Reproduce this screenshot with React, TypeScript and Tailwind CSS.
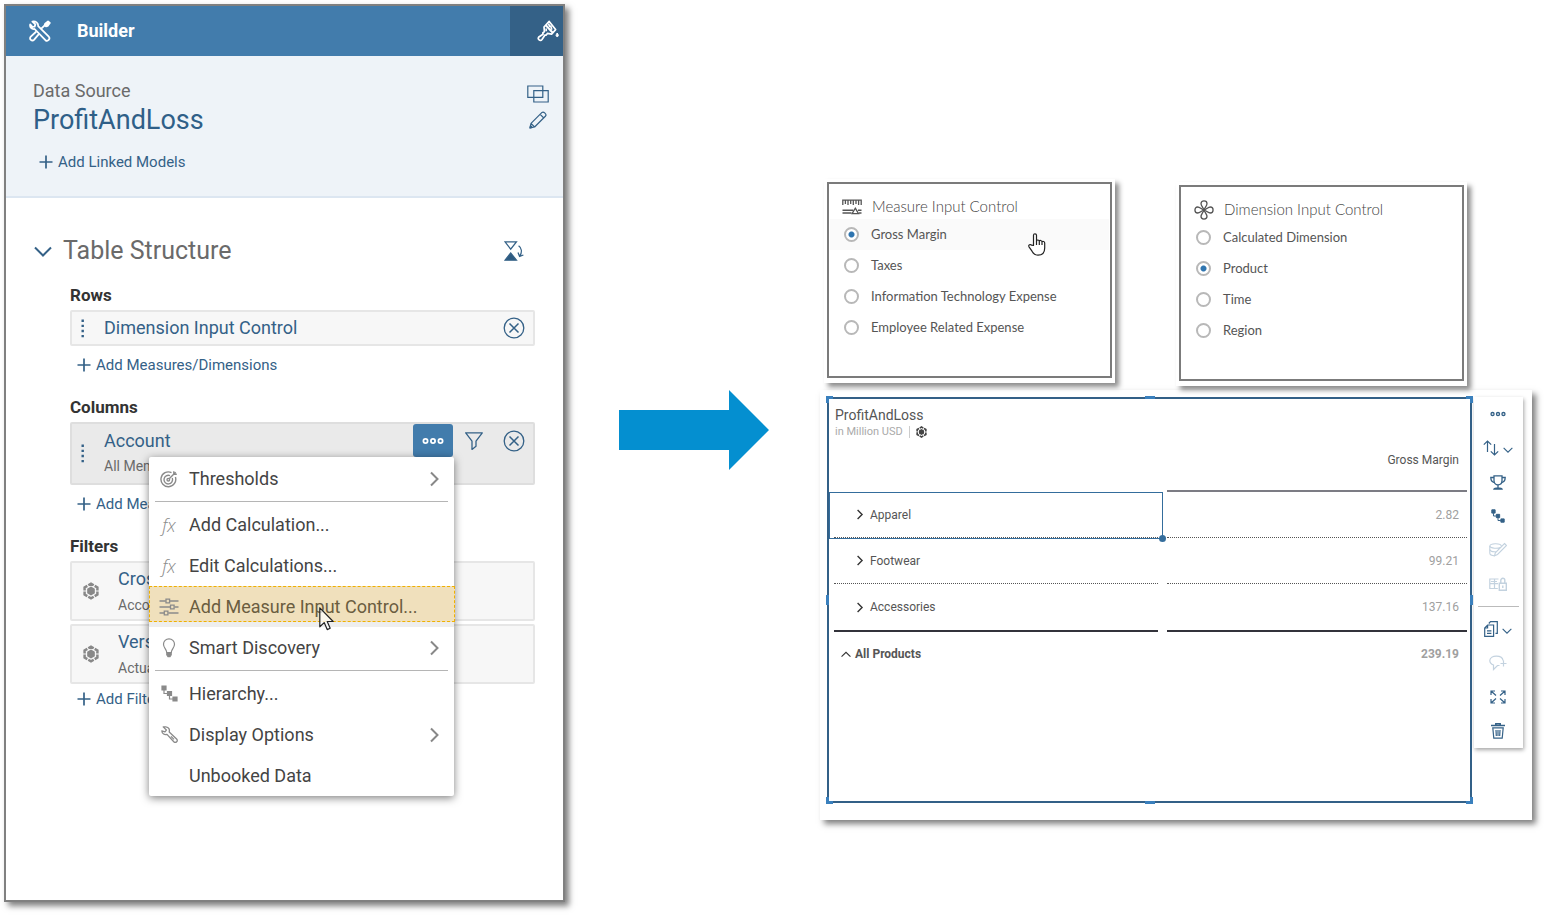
import { useState, type ReactNode } from "react";
import clsx from "clsx";

interface IconProps {
  className?: string;
}

/* ---------- Icons ---------- */

const ToolsIcon = () => (
  <svg viewBox="0 0 22 22" className="size-[22px]" fill="none" stroke="#fff" strokeWidth="1.8" strokeLinejoin="round" strokeLinecap="round">
    <path d="M3.400 1.600 6.400 4.400 5.600 6.600 3.400 6.900 1.200 4.400C.6 7.400 2.600 9.400 5.600 9L16.400 20.200C18.800 22 21.600 19 19.800 16.700L9.200 6.200C9.400 3 6.600.8 3.400 1.600Z" />
    <path d="M12.800 8.200 16 5.200M9.600 14.400 5.200 19.600C3 22-.4 18.800 1.800 16.600L6.800 12" />
    <path d="M16.200 3.600 19 1.400 20.800 3 18.600 6 17 6.400 15.600 5.200Z" fill="#fff" />
  </svg>
);

const BrushIcon = () => (
  <svg viewBox="0 0 22 22" className="size-[22px]" fill="none" stroke="#fff" strokeWidth="1.700" strokeLinejoin="round">
    <path d="M12.200 1.400 18.600 9.600 14.600 14.200 10.400 13.400 9 15.200 8 15 5 19.400C3.200 21.800.2 19.200 1.800 17L6 14.200 5.800 13 7.400 11.600 7 7Z" />
    <path d="m8.600 5 7.400 8" strokeWidth="2" />
    <path d="M11.400 3.600 13 7M13.600 5.400l1.200 4.400M9.200 8.600v2.600" />
    <path d="M20.200 13c1.700 2.300 1.300 3.600 0 3.600s-1.700-1.300 0-3.600Z" fill="#fff" strokeWidth="1" />
  </svg>
);

const OverlapIcon = () => (
  <svg viewBox="0 0 22 18" className="h-[18px] w-[22px]" fill="none" stroke="#346187" strokeWidth="1.200">
    <path d="M.8 1h15v11.400H.8zM6.800 5.600h14.400v11.400H6.800z" />
  </svg>
);

const PencilIcon = () => (
  <svg viewBox="0 0 18 18" className="size-[18px]" fill="none" stroke="#346187" strokeWidth="1.200" strokeLinejoin="round">
    <path d="M1 17 2 12.400 13 1.400C14.600.2 18 3.200 16.600 5L5.600 16ZM2 12.400 5.600 16M11.200 3.400l3.600 3.600" />
    <path d="m1 17 .5-2.400 1.900 1.900Z" fill="#346187" />
  </svg>
);

const SwapIcon = () => (
  <svg viewBox="0 0 20 20" className="size-5" fill="none" stroke="#346187" strokeWidth="1.300">
    <path d="M1 .8h11.400L6.700 8.200Z" />
    <path d="M1 19.200h11.400L6.700 12Z" fill="#2d5a80" />
    <path d="M14.600 4.800c3 2 3.600 6 1.400 10M14 11.600l1.600 3.800 3.800-1.400" />
  </svg>
);

const PlusIcon = () => (
  <svg viewBox="0 0 14 14" className="size-3.5" stroke="#346187" strokeWidth="1.700">
    <path d="M7 .5v13M.5 7h13" />
  </svg>
);

const CloseCircleIcon = () => (
  <svg viewBox="0 0 22 22" className="size-[22px]" fill="none" stroke="#346187" strokeWidth="1.300">
    <circle cx="11" cy="11" r="9.800" />
    <path d="m6.500 6.500 9 9m0-9-9 9" strokeWidth="1.500" />
  </svg>
);

const FunnelIcon = () => (
  <svg viewBox="0 0 18 18" className="size-[18px]" fill="none" stroke="#346187" strokeWidth="1.300" strokeLinejoin="round">
    <path d="M.7.800h16.600L11 9.200v5L7 17.400V9.200Z" />
  </svg>
);

const DotsIcon = ({ className }: IconProps) => (
  <svg viewBox="0 0 22 8" className={className} fill="none" stroke="currentColor" strokeWidth="1.800">
    <circle cx="3.500" cy="4" r="2.100" />
    <circle cx="11" cy="4" r="2.100" />
    <circle cx="18.500" cy="4" r="2.100" />
  </svg>
);

const GripIcon = () => (
  <svg viewBox="0 0 5 19" className="h-[19px] w-[5px]" fill="#346187">
    <path d="M1.500.600h2.400V3H1.500zM1.500 5.700h2.400v2.400H1.500zM1.500 10.800h2.400v2.400H1.500zM1.500 15.900h2.400v2.400H1.500z" />
  </svg>
);

const CubeIcon = ({ className }: IconProps) => (
  <svg viewBox="0 0 18 20" className={className} fill="none" stroke="currentColor" strokeWidth="2.800">
    <path d="M9 1.800 16.200 5.900v8.200L9 18.200 1.800 14.100V5.900Z" strokeDasharray="7 1.260" strokeDashoffset="3.500" />
    <path d="m9 5 4.300 2.500v5L9 15l-4.300-2.500v-5Z" fill="currentColor" stroke="none" />
  </svg>
);

const ChevronIcon = ({ className }: IconProps) => (
  <svg viewBox="0 0 9 16" className={className} fill="none" stroke="currentColor" strokeWidth="2">
    <path d="m1 1.500 6.500 6.500L1 14.500" />
  </svg>
);

const ChevronDownIcon = ({ className }: IconProps) => (
  <svg viewBox="0 0 18 11" className={className} fill="none" stroke="currentColor" strokeWidth="2">
    <path d="m1 1.500 8 8 8-8" />
  </svg>
);

const TargetIcon = () => (
  <svg viewBox="0 0 18 18" className="size-[18px]" fill="none" stroke="currentColor" strokeWidth="1.400">
    <path d="M11.500 2.600A7.400 7.400 0 1 0 15.400 7" />
    <path d="M10 5.700a4.300 4.300 0 1 0 2.300 2.400" />
    <circle cx="8.300" cy="9.700" r="1.300" />
    <path d="m9.200 8.800 6.500-6.500M13.800 1.200v3h3" />
  </svg>
);

const SlidersIcon = () => (
  <svg viewBox="0 0 20 18" className="h-[18px] w-5" fill="none" stroke="currentColor" strokeWidth="1.300">
    <path d="M.5 3h6.300M11 3h8.500M.5 9h10.800M15.500 9h4M.5 15H5M9.300 15h10.200" />
    <path d="M7 1.200h3.600v3.600H7zM11.500 7.200h3.600v3.600h-3.600zM5.300 13.200h3.600v3.600H5.300z" />
  </svg>
);

const BulbIcon = () => (
  <svg viewBox="0 0 14 20" className="h-5 w-3.5" fill="none" stroke="currentColor" strokeWidth="1.200">
    <path d="M4.800 14.500C4.500 11 1.500 10 1.500 6.300a5.500 5.500 0 0 1 11 0c0 3.700-3 4.700-3.300 8.200Z" />
    <path d="M4.800 14.500h4.400v2.300L8 18.600H6l-1.200-1.800Z" fill="currentColor" />
  </svg>
);

const HierarchyIcon = ({ className }: IconProps) => (
  <svg viewBox="0 0 17 17" className={className} fill="currentColor" stroke="currentColor" strokeWidth="1.200">
    <path d="M1 1h4v4H1zM6.500 6.500h4v4h-4zM12 12h4v4h-4z" />
    <path d="M3 5v3.500h4M8.500 10v4H12" fill="none" />
  </svg>
);

const WrenchIcon = () => (
  <svg viewBox="0 0 17 17" className="size-[17px]" fill="none" stroke="currentColor" strokeWidth="1.300" strokeLinejoin="round">
    <path d="M2.200.900h2.600C8 1.200 8.800 3.600 8.200 6l7.400 7c1.800 2-.8 4.600-2.800 2.800L6 8.400C3.600 9 1 8 .8 4.800L4 5.800 5.400 4ZM10 10.400l3 3" />
  </svg>
);

const RulerIcon = () => (
  <svg viewBox="0 0 20 16" className="h-4 w-5" fill="none" stroke="#555" strokeWidth="1.300">
    <path d="M.8 6V1.200h18.400V6M3.400 1v4M6 1v5M8.700 1v4M11.300 1v5M14 1v4M16.600 1v5" />
    <path d="M.5 11.200h10.700M.5 13.900h9M16 11.200h3.500M17 13.900h2.500" strokeWidth="1.500" />
    <path d="m13.300 9.200 3.200 5.400h-6.400Z" />
  </svg>
);

const CloverIcon = () => (
  <svg viewBox="0 0 20 20" className="size-5" fill="none" stroke="#555" strokeWidth="1.300">
    <path d="M10 10C9 7.500 7 5.500 7 3.700 7 0 13 0 13 3.700 13 5.500 11 7.500 10 10ZM10 10c-1 2.500-3 4.500-3 6.300 0 3.700 6 3.700 6 0 0-1.800-2-3.800-3-6.300Z" />
    <path d="M10 10C7.500 9 5.500 7 3.700 7 0 7 0 13 3.700 13 5.500 13 7.500 11 10 10ZM10 10c2.500-1 4.500-3 6.300-3 3.700 0 3.700 6 0 6-1.800 0-3.800-2-6.300-3Z" />
  </svg>
);

const HandCursor = () => (
  <svg viewBox="0 0 18 23" className="h-[23px] w-[18px]" fill="#fff" stroke="#222" strokeWidth="1.200" strokeLinejoin="round">
    <path d="M5.500 12.500V2.300c0-2 3-2 3 0V8c.3-1.400 2.600-1.300 2.800.3.400-1.300 2.600-1 2.700.7.600-1 2.700-.7 2.700 1v5c0 4.500-2.600 7.200-6.700 7.200-3.600 0-4.700-1.700-6-4L1 13.800c-.9-1.700 1.200-3 2.500-1.600Z" />
    <path d="M8.500 8v4M11.300 8.500v3.500M14 9.200V12" fill="none" />
  </svg>
);

const ArrowCursor = () => (
  <svg viewBox="0 0 15 24" className="h-6 w-[15px]" fill="#fff" fillOpacity=".75" stroke="#222" strokeWidth="1.200" strokeLinejoin="round">
    <path d="M.8.800v19l4.400-4.200 3 7 3-1.300-3-6.800h6Z" />
  </svg>
);

const SortIcon = () => (
  <svg viewBox="0 0 16 16" className="size-4" fill="none" stroke="currentColor" strokeWidth="1.200">
    <path d="M4.500 12V1M.8 4.700 4.500 1l3.700 3.700M11.500 4v11M7.800 11.300l3.700 3.700 3.700-3.700" />
  </svg>
);

const TrophyIcon = () => (
  <svg viewBox="0 0 16 15" className="h-[15px] w-4" fill="none" stroke="currentColor" strokeWidth="1.300">
    <path d="M4 .8h8v5c0 2.600-2 4-4 4s-4-1.400-4-4Z" />
    <path d="M4 2.500H.8c0 3.300 1.200 4.700 3.800 5M12 2.500h3.200c0 3.300-1.200 4.700-3.800 5M8 10v2.500M4 14c.5-1.500 7.500-1.500 8 0Z" />
  </svg>
);

const DataEditIcon = () => (
  <svg viewBox="0 0 18 16" className="h-4 w-[18px]" fill="none" stroke="currentColor" strokeWidth="1.100">
    <path d="M12.500 4.500C12 1 1.500 1 .8 4v7c0 1.800 2.800 2.700 5 2.700" />
    <path d="M.8 4c.7 2.600 8 3 11 1.200M.8 7.600c.6 1.800 4 2.400 7 2M15.500 1.500l2 2-9 9-3 1.300.8-3Z" />
  </svg>
);

const DataLockIcon = () => (
  <svg viewBox="0 0 18 14" className="h-3.5 w-[18px]" fill="none" stroke="currentColor" strokeWidth="1.200">
    <path d="M9.500 2H.8v9.500h8M.8 6.700H9M5.500 2v9.500M2 4.500h6" />
    <path d="M10.300 6.200h7v7.100h-7zM11.800 6.200V3.300a2 2 0 0 1 4 0v2.900M13.800 8.500v2.500" strokeWidth="1.400" />
  </svg>
);

const CopyIcon = () => (
  <svg viewBox="0 0 14 16" className="h-4 w-3.5" fill="none" stroke="currentColor" strokeWidth="1.200">
    <path d="M3.600 4h6v11.300H.7V7ZM3.600 4v3H.7M3 9.800h4.400M3 12.300h4.400" />
    <path d="M4.800 2.500 6.500.700h6.800v11.600h-1.800" />
  </svg>
);

const CommentIcon = () => (
  <svg viewBox="0 0 18 16" className="h-4 w-[18px]" fill="none" stroke="currentColor" strokeWidth="1.200">
    <path d="M14 5.500C13.500-.5 1-.3.800 5.500c0 2.500 1.700 3.800 3.700 4.500v4.500l4-4h2M14.500 5.500v6M11.500 8.500h6" />
  </svg>
);

const ExpandIcon = () => (
  <svg viewBox="0 0 16 14" className="h-3.5 w-4" fill="none" stroke="currentColor" strokeWidth="1.200">
    <path d="m1 1 5 4.500M1 5V1h4M15 1l-5 4.500M11 1h4v4M1 13l5-4.500M1 9v4h4M15 13l-5-4.500M11 13h4V9" />
  </svg>
);

const TrashIcon = () => (
  <svg viewBox="0 0 14 16" className="h-4 w-3.5" fill="none" stroke="currentColor" strokeWidth="1.200">
    <path d="M0 2.600h14M4.800 2V.800h4.400V2" strokeWidth="1.500" />
    <path d="M1.800 4.800h10.400l-1 10.400H2.800ZM5 7l.3 6M7 7v6M9 7l-.3 6" />
  </svg>
);

/* ---------- Builder panel ---------- */

const AddButton = ({ text, className }: { text: string; className?: string }) => (
  <button type="button" className={clsx("flex h-5 items-center gap-[5px] text-[15px] text-[#346187]", className)}>
    <PlusIcon />
    {text}
  </button>
);

const FxIcon = () => <i className="font-['Open_Sans',sans-serif] text-lg font-light">fx</i>;

const menuItems: {
  label: string;
  icon?: ReactNode;
  submenu?: boolean;
  divider?: boolean;
  active?: boolean;
}[] = [
  { label: "Thresholds", icon: <TargetIcon />, submenu: true, divider: true },
  { label: "Add Calculation...", icon: <FxIcon /> },
  { label: "Edit Calculations...", icon: <FxIcon /> },
  { label: "Add Measure Input Control...", icon: <SlidersIcon />, active: true },
  { label: "Smart Discovery", icon: <BulbIcon />, submenu: true, divider: true },
  { label: "Hierarchy...", icon: <HierarchyIcon className="size-[17px]" /> },
  { label: "Display Options", icon: <WrenchIcon />, submenu: true },
  { label: "Unbooked Data" },
];

const AccountMenu = () => (
  <ul className="absolute top-full -right-px z-10 w-[305px] rounded-xs bg-white pt-px text-[#444] shadow-[0_2px_9px_rgba(0,0,0,0.5)]">
    {menuItems.map((item) => (
      <li key={item.label}>
        <button
          type="button"
          className={clsx(
            "relative flex h-[41px] w-full items-center pr-[15px] pl-[10px] text-left text-lg",
            item.active && "bg-[#eeeeee]"
          )}
        >
          {item.active && (
            <span className="absolute top-0 -right-px left-0 h-9 border border-dashed border-[#f0b000] bg-[#f0e0bc]" />
          )}
          <span className="relative flex w-5 justify-center text-[#8a8a8a]">{item.icon}</span>
          <span className={clsx("relative ml-[10px] flex-1", item.active && "text-[#6b5d40]")}>{item.label}</span>
          {item.submenu && <ChevronIcon className="h-4 w-[9px] text-[#888]" />}
          {item.active && (
            <span className="absolute top-[21px] left-[170px]">
              <ArrowCursor />
            </span>
          )}
        </button>
        {item.divider && <hr className="mx-[6px] my-[2px] border-[#b5b5b5]" />}
      </li>
    ))}
  </ul>
);

const FilterBox = ({ title, detail }: { title: string; detail: string }) => (
  <div className="flex h-[60px] items-center rounded-xs border-2 border-[#e6e6e6] bg-[#f7f7f7] pl-[11px]">
    <CubeIcon className="h-[18px] w-4 text-[#888]" />
    <div className="ml-[19px] pt-[2px]">
      <p className="text-lg leading-[26px] text-[#346187]">{title}</p>
      <p className="text-sm leading-[26px] text-[#6a6a6a]">{detail}</p>
    </div>
  </div>
);

const SectionLabel = ({ children }: { children: ReactNode }) => (
  <h3 className="mb-[5px] text-[17px] leading-5 font-bold text-[#333]">{children}</h3>
);

const BuilderPanel = () => (
  <aside className="w-[561px] shrink-0 border-2 border-[#808080] bg-white font-[Roboto,sans-serif] shadow-[4px_4px_6px_rgba(0,0,0,0.5)]">
    <header className="flex h-[50px] items-stretch bg-[#427cac] text-white">
      <h1 className="flex flex-1 items-center gap-[26px] pl-[23px] text-lg font-bold">
        <ToolsIcon />
        Builder
      </h1>
      <button type="button" aria-label="Styling" className="flex w-[53px] items-center justify-end bg-[#346187] pr-1">
        <BrushIcon />
      </button>
    </header>

    {/* Data source */}
    <section className="flex justify-between border-b-2 border-[#dce6f1] bg-[#eef3f8] pt-6 pr-[14px] pb-[24px] pl-[27px]">
      <div>
        <p className="text-lg leading-[22px] text-[#6a6a6a]">Data Source</p>
        <h2 className="text-[27px] leading-[36px] text-[#2f5f88]">ProfitAndLoss</h2>
        <AddButton text="Add Linked Models" className="mt-[14px] ml-[6px]" />
      </div>
      <div className="flex flex-col items-center gap-2 pt-[5px]">
        <button type="button" aria-label="Change model">
          <OverlapIcon />
        </button>
        <button type="button" aria-label="Edit model">
          <PencilIcon />
        </button>
      </div>
    </section>

    {/* Table structure */}
    <section className="pt-[35px] pr-7 pl-16">
      <div className="-ml-9 flex h-9 items-center pr-[11px]">
        <ChevronDownIcon className="h-[11px] w-[18px] text-[#346187]" />
        <h2 className="ml-[11px] flex-1 text-[25px] text-[#6a6a6a]">Table Structure</h2>
        <button type="button" aria-label="Swap axis">
          <SwapIcon />
        </button>
      </div>

      <div className="mt-4">
        <SectionLabel>Rows</SectionLabel>
        <div className="flex h-9 items-center rounded-xs border-2 border-[#e6e6e6] bg-[#f7f7f7] pr-2 pl-2">
          <GripIcon />
          <p className="ml-[19px] flex-1 text-lg text-[#346187]">Dimension Input Control</p>
          <button type="button" aria-label="Remove dimension">
            <CloseCircleIcon />
          </button>
        </div>
        <AddButton text="Add Measures/Dimensions" className="mt-[9px] ml-[7px]" />
      </div>

      <div className="mt-[22px]">
        <SectionLabel>Columns</SectionLabel>
        <div className="flex h-[63px] rounded-xs border-2 border-[#dedede] bg-[#eaeaea] pr-2 pl-2">
          <span className="self-center">
            <GripIcon />
          </span>
          <div className="ml-[19px] flex-1 pt-1">
            <p className="text-lg leading-[26px] text-[#346187]">Account</p>
            <p className="text-sm leading-[24px] text-[#6a6a6a]">All Members</p>
          </div>
          <div className="flex h-[33px] items-center">
            <div className="relative">
              <button type="button" aria-label="More" className="flex h-[33px] w-10 items-center justify-center rounded-[3px] bg-[#427cac] text-white">
                <DotsIcon className="h-2 w-[22px]" />
              </button>
              <AccountMenu />
            </div>
            <button type="button" aria-label="Filter" className="ml-3">
              <FunnelIcon />
            </button>
            <button type="button" aria-label="Remove account" className="ml-5">
              <CloseCircleIcon />
            </button>
          </div>
        </div>
        <AddButton text="Add Measures" className="mt-[9px] ml-[7px]" />
      </div>

      <div className="mt-[22px]">
        <SectionLabel>Filters</SectionLabel>
        <div className="flex flex-col gap-[3px]">
          <FilterBox title="Cross" detail="Account" />
          <FilterBox title="Version" detail="Actual" />
        </div>
        <AddButton text="Add Filters" className="mt-[5px] ml-[7px]" />
      </div>
    </section>
  </aside>
);

/* ---------- Input controls ---------- */

interface InputControlProps {
  title: string;
  name: string;
  icon: ReactNode;
  options: string[];
  initial: string;
  hovered?: string;
  className?: string;
}

const InputControl = ({ title, name, icon, options, initial, hovered, className }: InputControlProps) => {
  const [selected, setSelected] = useState(initial);

  return (
    <div className={clsx("bg-white px-[3px] pt-[3px] pb-[5px] font-[Lato,sans-serif] shadow-[4px_4px_5px_rgba(0,0,0,0.45)]", className)}>
      <fieldset className="border-2 border-[#7b7b7b] px-px pb-[33px]">
        <div className="flex h-[35px] items-center gap-[10px] pt-[10px] pl-3 text-[15px] font-light text-[#444]">
          {icon}
          {title}
        </div>
        {options.map((option) => (
          <label
            key={option}
            className={clsx(
              "relative flex h-[31px] items-center gap-3 pl-[14px] text-[13px] text-[#555]",
              option === hovered && "bg-[#fafafa]"
            )}
          >
            <input
              type="radio"
              name={name}
              checked={selected === option}
              onChange={() => setSelected(option)}
              className="size-[15px] appearance-none rounded-full border-2 border-[#b8b8b8] bg-white checked:bg-[radial-gradient(circle,#2f75b0_2.5px,transparent_3.5px)]"
            />
            {option}
            {option === hovered && (
              <span className="absolute top-[14px] right-[63px]">
                <HandCursor />
              </span>
            )}
          </label>
        ))}
      </fieldset>
    </div>
  );
};

/* ---------- Table widget ---------- */

const rows = [
  { name: "Apparel", value: "2.82", selected: true },
  { name: "Footwear", value: "99.21" },
  { name: "Accessories", value: "137.16" },
];

const handles = [
  "-top-[3px] -left-[3px] size-[7px] border-t-3 border-l-3",
  "-top-[3px] -right-[3px] size-[7px] border-t-3 border-r-3",
  "-bottom-[3px] -left-[3px] size-[7px] border-b-3 border-l-3",
  "-bottom-[3px] -right-[3px] size-[7px] border-b-3 border-r-3",
  "-top-[3px] left-1/2 w-2.5 -translate-x-1/2 border-t-3",
  "-bottom-[3px] left-1/2 w-2.5 -translate-x-1/2 border-t-3",
  "top-1/2 -left-[3px] h-2.5 -translate-y-1/2 border-l-3",
  "top-1/2 -right-[3px] h-2.5 -translate-y-1/2 border-l-3",
];

const TableWidget = () => (
  <div className="relative flex-1 border-2 border-[#336087] pt-[7px] pr-[3px] pb-[125px] pl-[5px]">
    {handles.map((position) => (
      <span key={position} className={clsx("absolute border-[#3a80bd]", position)} />
    ))}
    <h2 className="pl-px text-sm leading-[18px] text-[#555]">ProfitAndLoss</h2>
    <p className="flex h-4 items-center pl-px text-[11px] text-[#aaa]">
      in Million USD
      <span className="ml-[6px] h-3 border-l border-[#ccc]" />
      <CubeIcon className="ml-[6px] h-3 w-[11px] text-[#444]" />
    </p>

    <table className="w-full table-fixed border-separate border-spacing-0 text-xs text-[#555]">
      <thead>
        <tr className="h-[52px] align-top">
          <th className="w-[324px]" aria-label="Product" />
          <td className="w-[9px]" />
          <th className="border-b-2 border-[#7c7c84] pt-3 pr-2 text-right font-normal">Gross Margin</th>
        </tr>
      </thead>
      <tbody>
        {rows.map((row, index) => {
          const isLast = index === rows.length - 1;
          const line = isLast ? "border-b-2 border-[#33333b]" : "border-b border-dotted border-[#555]";

          return (
            <tr key={row.name} className={isLast ? "h-12" : "h-[46px]"}>
              <th className={clsx("relative p-0 text-left font-normal", line)}>
                <button type="button" className="flex items-center gap-[6px] pl-[22px]">
                  <ChevronIcon className="h-[11px] w-2 text-[#333]" />
                  {row.name}
                </button>
                {row.selected && (
                  <span className="absolute top-0 -right-[5px] -bottom-0.5 -left-[5px] border border-[#346d9c]">
                    <span className="absolute -right-1 -bottom-1 size-[7px] rounded-full bg-[#346d9c]" />
                  </span>
                )}
              </th>
              <td />
              <td className={clsx("pr-2 text-right text-[#a0a0a0]", line)}>{row.value}</td>
            </tr>
          );
        })}
        <tr className="h-[44px] font-bold">
          <th className="p-0 text-left">
            <button type="button" className="flex items-center gap-1 pl-[7px] font-bold">
              <ChevronDownIcon className="h-[7px] w-2.5 rotate-180 text-[#333]" />
              All Products
            </button>
          </th>
          <td />
          <td className="pr-2 text-right text-[#a0a0a0]">239.19</td>
        </tr>
      </tbody>
    </table>
  </div>
);

const tools: { label: string; icon: ReactNode; dropdown?: boolean; disabled?: boolean; divider?: boolean }[] = [
  { label: "More actions", icon: <DotsIcon className="h-1.5 w-4" /> },
  { label: "Sort", icon: <SortIcon />, dropdown: true },
  { label: "Rank", icon: <TrophyIcon /> },
  { label: "Hierarchy level", icon: <HierarchyIcon className="size-[14px]" /> },
  { label: "Edit data", icon: <DataEditIcon />, disabled: true },
  { label: "Lock data", icon: <DataLockIcon />, disabled: true, divider: true },
  { label: "Copy", icon: <CopyIcon />, dropdown: true },
  { label: "Add comment", icon: <CommentIcon />, disabled: true },
  { label: "Fullscreen", icon: <ExpandIcon /> },
  { label: "Delete", icon: <TrashIcon /> },
];

const Toolbar = () => (
  <div className="ml-[2px] w-[49px] self-start bg-white shadow-[1px_2px_4px_rgba(0,0,0,0.35)]">
    {tools.map((tool) => (
      <div key={tool.label}>
        <button
          type="button"
          aria-label={tool.label}
          disabled={tool.disabled}
          className="flex h-[34px] w-full items-center justify-center gap-1 pr-0.5 text-[#346187] disabled:text-[#c3d2df]"
        >
          {tool.icon}
          {tool.dropdown && <ChevronDownIcon className="mt-1 h-[6px] w-[10px]" />}
        </button>
        {tool.divider && <hr className="mx-1 mt-[5px] mb-[5px] border-[#bbb]" />}
      </div>
    ))}
  </div>
);

export default function App() {
  return (
    <div className="flex min-h-screen bg-white pt-1 pr-3 pb-[13px] pl-1">
      <BuilderPanel />

      <svg viewBox="0 0 150 80" className="mt-[386px] ml-[54px] h-20 w-[150px] shrink-0" fill="#048fd0">
        <path d="M0 20h110V0l40 40-40 40V60H0Z" />
      </svg>

      <main className="mt-[175px] ml-[51px] flex-1">
        <div className="grid grid-cols-2 items-start gap-[61px] pr-[65px] pl-1">
          <InputControl
            title="Measure Input Control"
            name="measure"
            icon={<RulerIcon />}
            options={["Gross Margin", "Taxes", "Information Technology Expense", "Employee Related Expense"]}
            initial="Gross Margin"
            hovered="Gross Margin"
          />
          <InputControl
            title="Dimension Input Control"
            name="dimension"
            icon={<CloverIcon />}
            options={["Calculated Dimension", "Product", "Time", "Region"]}
            initial="Product"
            className="mt-[3px]"
          />
        </div>

        <div className="mt-1 flex bg-white pt-[7px] pr-[9px] pb-[17px] pl-[7px] font-[Roboto,sans-serif] shadow-[4px_4px_6px_rgba(0,0,0,0.5)]">
          <TableWidget />
          <Toolbar />
        </div>
      </main>
    </div>
  );
}
